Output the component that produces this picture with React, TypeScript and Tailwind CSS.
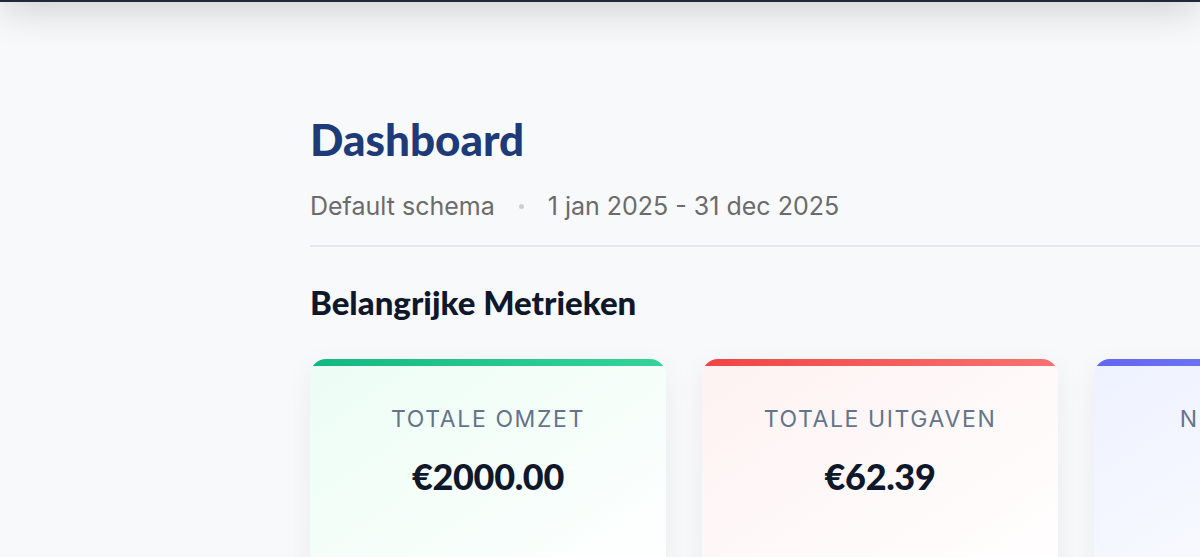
import React from 'react';

interface Metric {
  label: string;
  value: string;
  bar: string;
  bg: string;
}

const metrics: Metric[] = [
  {
    label: 'Totale Omzet',
    value: '€2000.00',
    bar: 'bg-gradient-to-r from-[#10b981] to-[#34d399]',
    bg: 'bg-gradient-to-br from-[#ecfdf5] to-white',
  },
  {
    label: 'Totale Uitgaven',
    value: '€62.39',
    bar: 'bg-gradient-to-r from-[#ef4444] to-[#f87171]',
    bg: 'bg-gradient-to-br from-[#fef2f2] to-white',
  },
  {
    label: 'Netto Marge',
    value: '96.9%',
    bar: 'bg-gradient-to-r from-[#6366f1] to-[#818cf8]',
    bg: 'bg-gradient-to-br from-[#eef2ff] to-white',
  },
];

const MetricCard: React.FC<{ metric: Metric }> = ({ metric }) => (
  <div
    className={`relative w-[356px] shrink-0 h-[240px] rounded-2xl overflow-hidden shadow-[0_8px_30px_rgba(15,23,42,0.06)] ${metric.bg}`}
  >
    <div className={`h-[7px] w-full ${metric.bar}`} />
    <div className="flex flex-col items-center pt-[42px]">
      <p className="font-['Inter',sans-serif] text-[23px] uppercase tracking-[0.07em] text-[#64748b] leading-none">
        {metric.label}
      </p>
      <p className="mt-[27px] font-['Lato',sans-serif] font-black text-[36px] tracking-[-0.01em] text-[#0f172a] leading-none">
        {metric.value}
      </p>
    </div>
  </div>
);

const App: React.FC = () => {
  return (
    <div className="w-full h-[557px] overflow-hidden bg-[#f8f9fb]">
      {/* Header edge (scrolled out of view) */}
      <div className="-mt-[70px] h-[72px] w-full bg-[#1e293b] shadow-[0_4px_45px_rgba(0,0,0,0.2)]" />

      <main className="pl-[310px] pt-[115px]">
        <h1 className="font-['Lato',sans-serif] font-black text-[44px] leading-none text-[#1e3a78]">
          Dashboard
        </h1>

        <div className="mt-[33px] flex items-center font-['Inter',sans-serif] text-[25px] leading-none text-[#6b6b6b]">
          <span>Default schema</span>
          <span className="mx-[24px] w-[5px] h-[5px] rounded-full bg-[#cfcfcf]" />
          <span>1 jan 2025 - 31 dec 2025</span>
        </div>

        <div className="mt-[26px] h-[2px] bg-[#e7e8ec]" />

        <h2 className="mt-[39px] font-['Lato',sans-serif] font-black text-[33px] leading-none text-[#0f172a]">
          Belangrijke Metrieken
        </h2>

        <div className="mt-[40px] flex gap-[36px]">
          {metrics.map((m) => (
            <MetricCard key={m.label} metric={m} />
          ))}
        </div>
      </main>
    </div>
  );
};

export default App;
